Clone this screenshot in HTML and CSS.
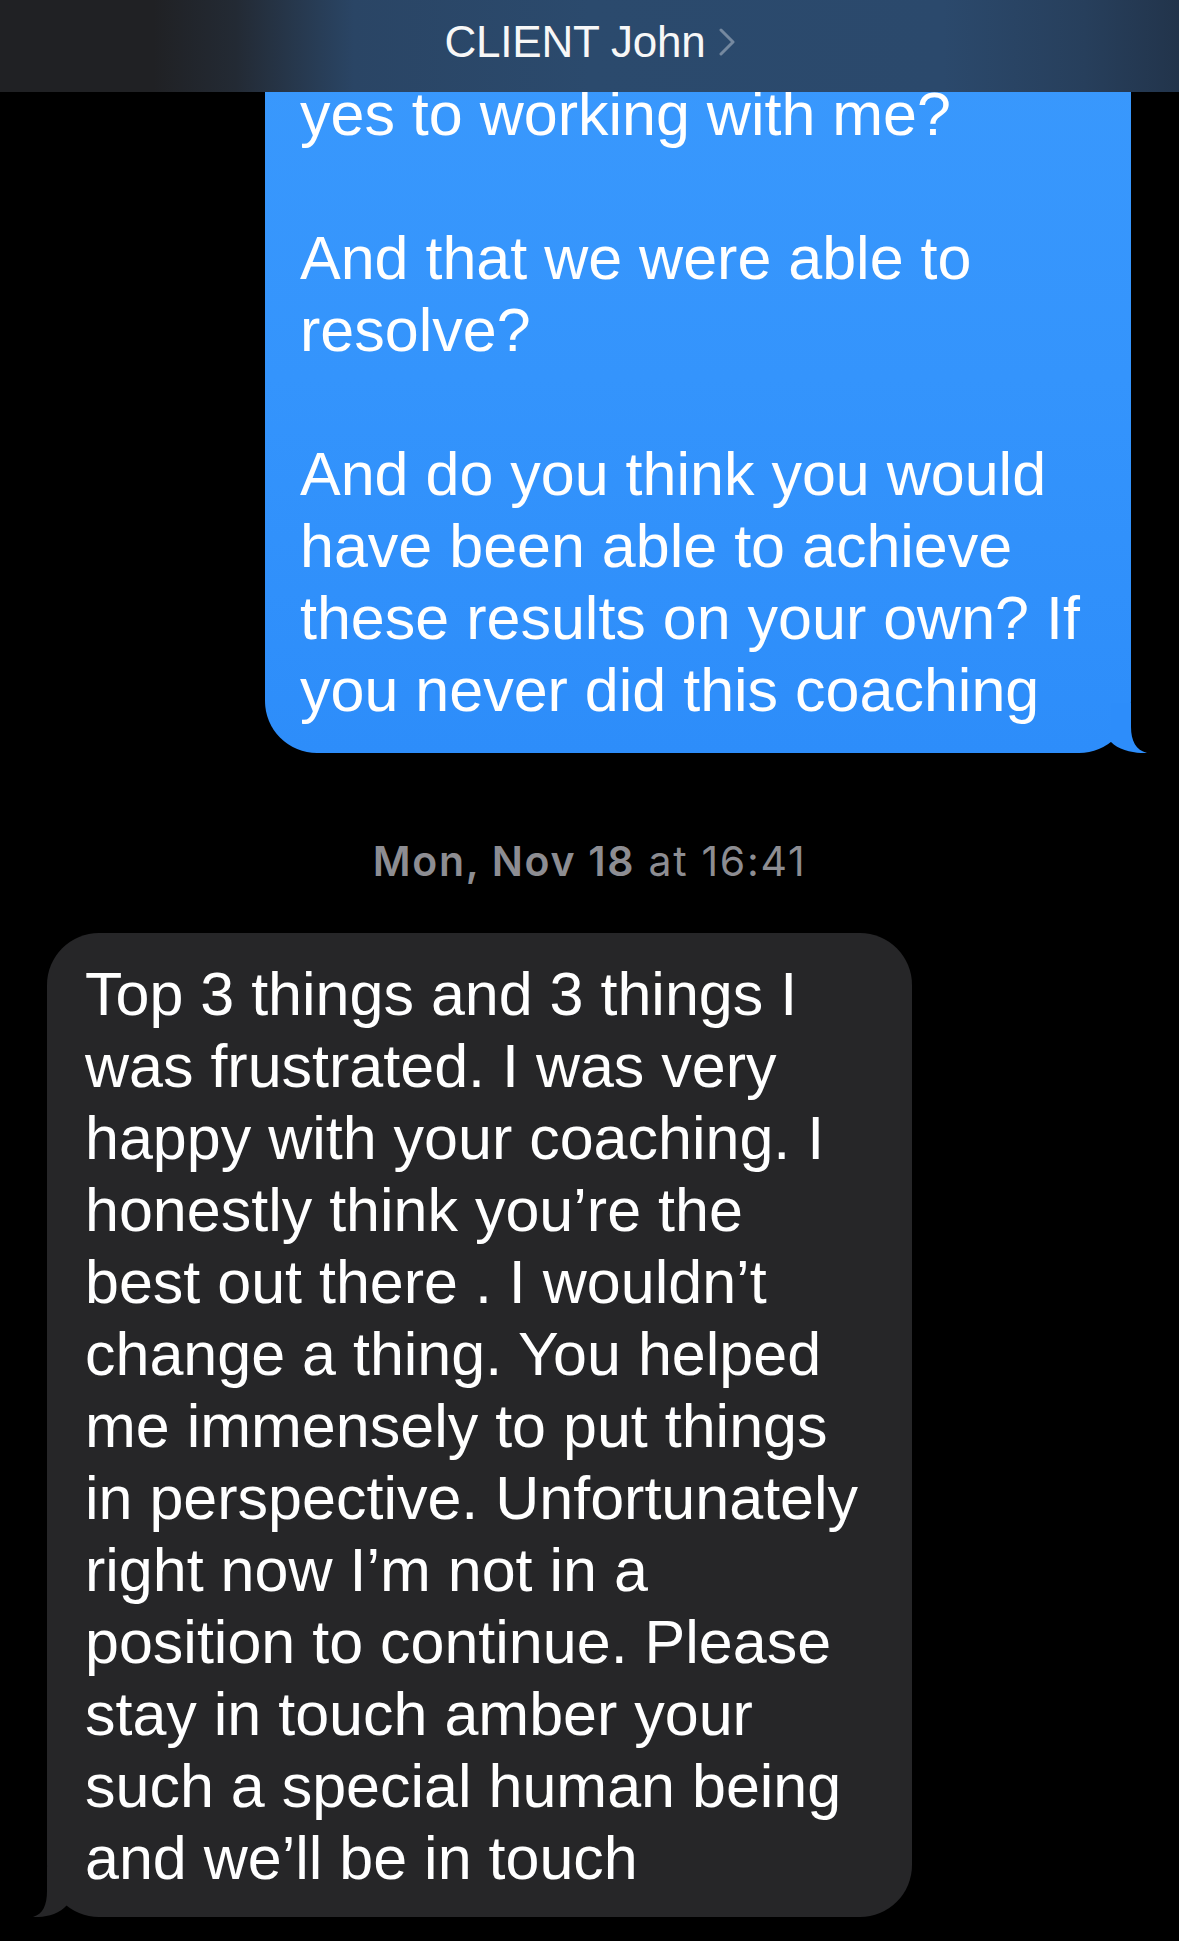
FILE: index.html
```html
<!DOCTYPE html>
<html lang="en">
<head>
<meta charset="utf-8">
<title>CLIENT John</title>
<link rel="stylesheet" href="styles.css">
</head>
<body>
<header class="topbar">
  <span class="contact-name">CLIENT John</span>
  <svg class="chevron" width="16" height="28" viewBox="0 0 16 28" aria-hidden="true"><polyline points="2,2 14,14 2,26" fill="none" stroke="rgba(255,255,255,0.35)" stroke-width="3" stroke-linecap="round" stroke-linejoin="round"/></svg>
</header>
<main class="thread">
  <div class="bubble sent">
    <p class="msg">yes to working with me?<br><br>And that we were able to<br>resolve?<br><br>And do you think you would<br>have been able to achieve<br>these results on your own? If<br>you never did this coaching</p>
    <svg class="tail tail-sent" width="50" height="50" viewBox="0 0 50 50" aria-hidden="true"><path d="M14 0 H34 V24 C34 38 39 47 50 50 C40 50.6 22 48 14 39 Z" fill="#2d8dfa"/></svg>
  </div>
  <div class="timestamp"><span class="ts-day">Mon, Nov 18</span> at 16:41</div>
  <div class="bubble received">
    <p class="msg">Top 3 things and 3 things I<br>was frustrated. I was very<br>happy with your coaching. I<br>honestly think you’re the<br>best out there . I wouldn’t<br>change a thing. You helped<br>me immensely to put things<br>in perspective. Unfortunately<br>right now I’m not in a<br>position to continue. Please<br>stay in touch amber your<br>such a special human being<br>and we’ll be in touch</p>
    <svg class="tail tail-received" width="50" height="50" viewBox="0 0 50 50" aria-hidden="true"><path d="M34 0 H14 V24 C14 38 10 47 0 50 C10 50.6 26 48 34 38 Z" fill="#262628"/></svg>
  </div>
</main>
</body>
</html>
```
FILE: styles.css
```css
* { box-sizing: border-box; }

html, body {
  margin: 0;
  padding: 0;
  background: #000;
}

body {
  font-family: "Liberation Sans", Arial, sans-serif;
  color: #fff;
  min-height: 1941px;
}

.topbar {
  position: fixed;
  top: 0;
  left: 0;
  right: 0;
  height: 92px;
  padding-top: 20px;
  display: flex;
  justify-content: center;
  align-items: flex-start;
  background: linear-gradient(to right, #202124 0%, #202124 13%, #232a34 20%, #2a4565 30%, #2b4a6d 50%, #2b496c 80%, #273f5c 92%, #22344b 100%);
  z-index: 10;
}

.contact-name {
  font-size: 44px;
  line-height: 44px;
  color: #f7f7f7;
  letter-spacing: -0.2px;
}

.chevron {
  margin-left: 13px;
  margin-top: 8px;
  flex: none;
}

.thread {
  display: flex;
  flex-direction: column;
}

.bubble {
  position: relative;
  border-radius: 52px;
}

.msg {
  margin: 0;
  font-size: 61px;
  line-height: 72px;
  white-space: nowrap;
}

.sent {
  align-self: flex-end;
  width: 866px;
  margin-right: 48px;
  padding: 78px 20px 27px 35px;
  border-top-left-radius: 0;
  border-top-right-radius: 0;
  background: linear-gradient(to bottom, #3a99fd 0%, #3494fc 50%, #2d8dfa 100%);
}

.received {
  align-self: flex-start;
  width: 865px;
  margin-left: 47px;
  margin-top: 47px;
  padding: 25px 20px 23px 38px;
  background: #262628;
}

.tail {
  position: absolute;
  bottom: 0;
}

.tail-sent {
  right: -16px;
}

.tail-received {
  left: -14px;
}

.timestamp {
  margin-top: 83px;
  text-align: center;
  font-family: Inter, "Liberation Sans", Arial, sans-serif;
  font-size: 41px;
  line-height: 50px;
  color: #8d8d92;
  letter-spacing: 1.7px;
}

.ts-day {
  font-weight: 600;
}
```
